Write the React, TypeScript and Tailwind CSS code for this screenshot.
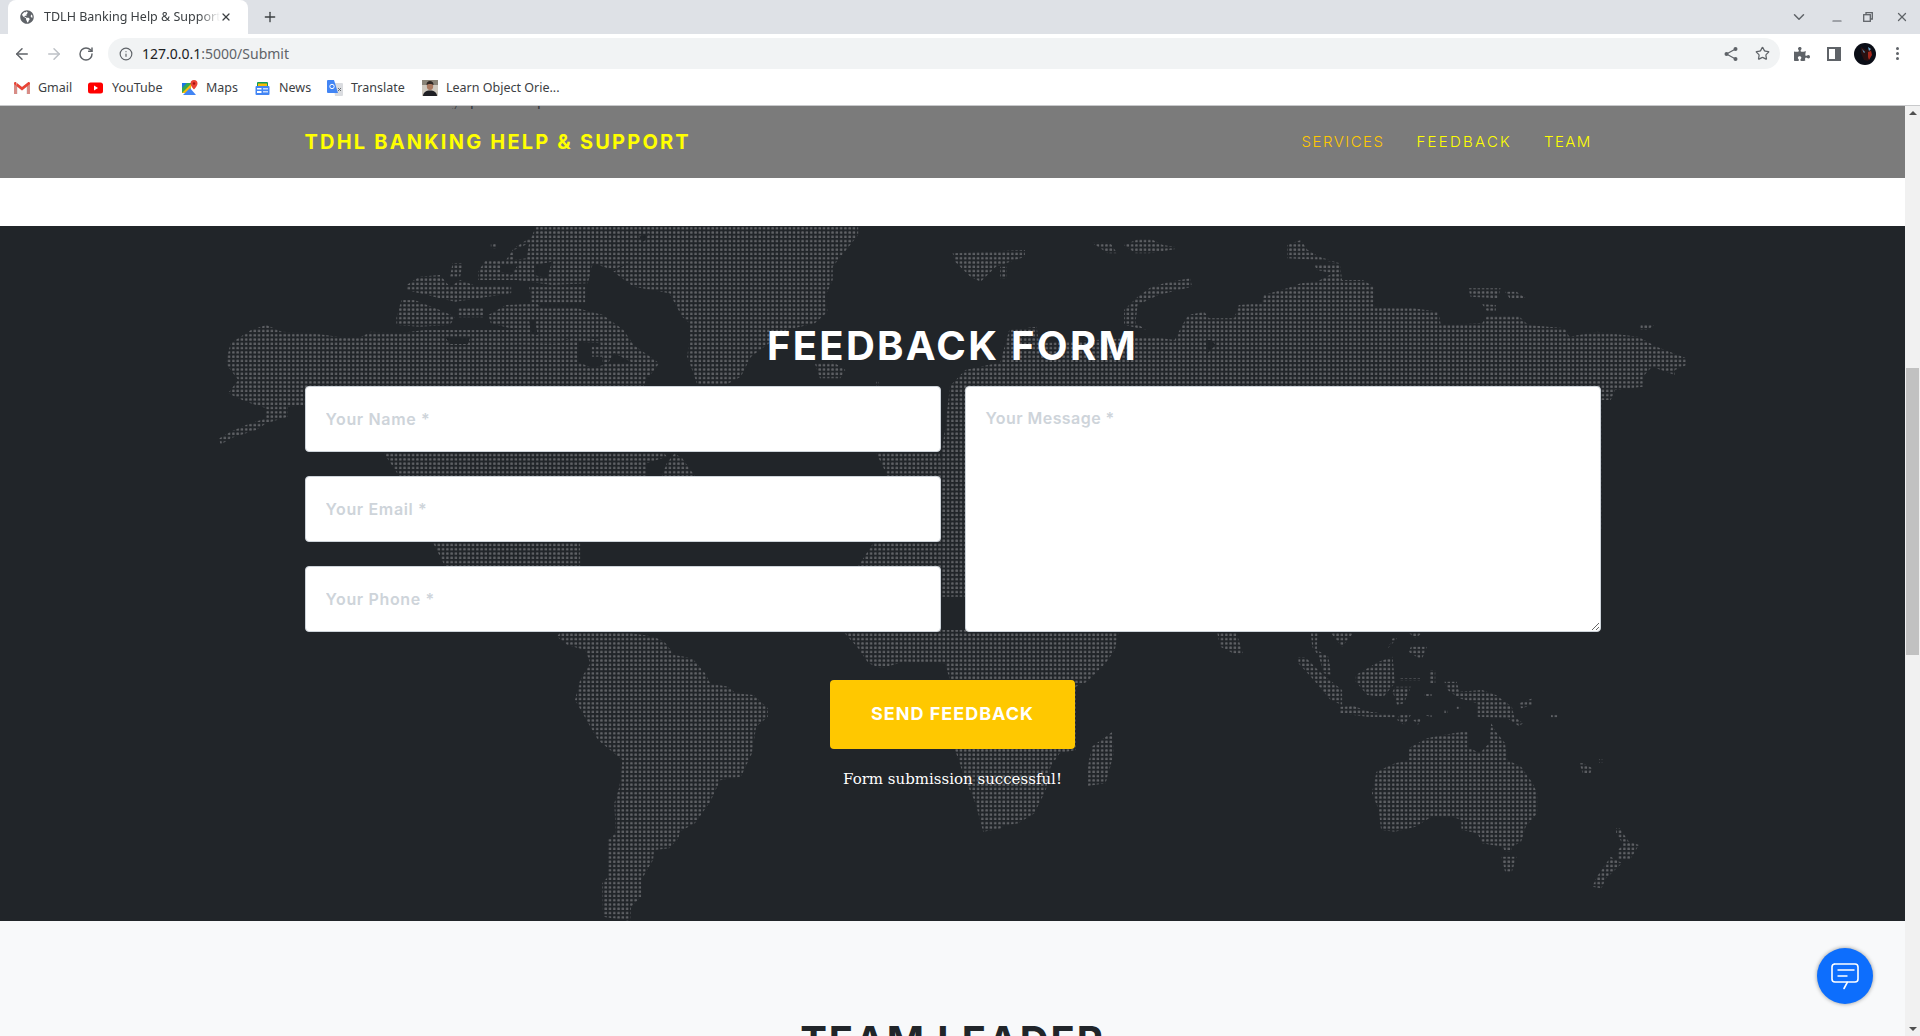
import React from "react";
import { ArrowLeft, ArrowRight, RotateCw, Info, Star, ChevronDown, X, Plus, Minus } from "lucide-react";
import { FaGlobeAmericas, FaPuzzlePiece } from "react-icons/fa";

type P = number[];
const path = (pts: P, ox: number, oy: number, sx: number) => {
  let d = "";
  for (let i = 0; i < pts.length; i += 2) {
    const x = ox + pts[i] / sx;
    const y = oy + pts[i + 1] / 3 - 226;
    d += (i === 0 ? "M" : "L") + x.toFixed(1) + " " + y.toFixed(1);
  }
  return d + "Z";
};

// Outlines traced from crops: each group has its own origin and horizontal scale.
const groupA: P[] = [
  [130,285,160,305,220,310,270,320,310,325,335,305,390,310,440,300,590,300,600,345,700,340,735,320,790,330,820,345,800,400,850,400,880,420,870,468,880,600,915,680,875,700,875,740,745,900,745,1010,640,1040,480,1008,390,738,360,668,207,525,172,530,172,560,130,580,110,600,60,625,40,645,38,625,60,605,90,585,130,565,130,535,90,515,55,490,75,450,50,400,60,340,100,300],
  [405,165,430,140,470,135,490,170,510,150,545,170,610,165,610,190,545,205,500,215,470,205,405,180],
  [395,210,420,210,470,240,500,260,490,285,430,290,385,285,385,260],
  [495,100,515,100,510,140,490,140],
  [570,40,580,40,580,55,570,55],
  [615,55,650,20,660,-15,900,-15,900,15,860,35,850,90,810,120,770,100,760,160,690,165,620,150,545,150,545,125,560,90,600,90],
  [645,170,755,170,755,218,650,218],
  [505,235,555,235,555,262,505,262],
  [565,255,600,225,660,220,670,235,740,235,790,255,830,300,850,345,900,400,880,440,850,400,800,360,780,325,730,320,700,340,600,345,590,300,620,300,570,280],
  [900,-15,1290,-15,1290,15,1240,110,1240,150,1225,200,1230,245,1205,280,1150,300,1080,380,1060,440,1030,465,975,465,960,400,955,380,960,320,960,280,945,260,920,190,850,170,810,125,850,90,850,30],
  [1205,400,1240,395,1265,420,1255,445,1215,445],
  [1475,70,1617,60,1617,80,1560,110,1530,155,1510,140,1480,95],
  [1470,468,1500,420,1560,400,1620,380,1620,1100,1450,1100,1450,700,1460,600],
  [1325,455,1330,455,1330,468,1325,468],
  [930,670,945,685,970,738,905,738,915,700],
  [1325,668,1450,668,1450,1200,1285,1200,1290,1008,1320,938,1345,730],
];
const holesA: P[] = [
  [740,335,785,340,790,405,770,415,740,395],
  [645,270,656,270,662,315,650,312],
  [660,110,680,110,670,130],
  [860,20,880,10,870,35],
  [590,105,625,100,610,135,590,125],
  [655,105,690,95,680,145,655,135],
  [615,60,645,40,640,85,615,90],
  [480,320,530,320,525,342,490,342],
];
const groupB: P[] = [
  [415,145,418,170,345,195,300,225,295,280,320,300,270,285,270,240,300,200,330,170,370,155],
  [0,400,20,300,80,290,85,340,330,320,380,330,395,290,410,255,445,245,455,265,510,265,520,225,570,220,575,195,625,175,655,160,690,155,725,130,690,120,685,105,740,100,700,90,625,85,625,45,655,30,670,60,695,80,740,100,745,150,790,150,815,170,815,230,860,235,900,235,955,245,960,285,1050,280,1060,258,1130,258,1150,285,1230,295,1240,320,1300,305,1390,320,1430,350,1495,385,1495,405,1470,420,1470,435,1420,410,1400,440,1400,470,1340,480,1330,510,1310,510,1310,900,0,900],
  [1020,175,1090,175,1085,205,1025,200],
  [1100,185,1125,185,1145,205,1110,205],
  [1050,222,1080,225,1080,242,1060,242],
  [1395,282,1428,282,1410,300,1395,300],
  [200,38,240,38,255,70,235,70],
  [270,45,300,28,330,28,355,45,380,50,380,58,325,70,295,70],
  [0,110,15,110,15,145,0,145],
];
const holesB: P[] = [[448,330,460,330,470,345,450,372]];
const groupC: P[] = [
  [-10,38,258,38,250,90,230,130,190,185,165,200,165,390,130,400,110,440,100,510,75,580,40,610,0,620,-10,620],
  [245,335,248,400,230,490,190,498,190,450,200,380],
  [473,38,515,38,530,105,515,105,480,80],
  [677,38,692,38,690,90,715,110,722,165,705,160,695,110,680,80],
  [720,38,770,38,745,80],
  [890,38,920,38,905,55],
  [895,80,930,80,918,120,890,95],
  [855,55,865,55,845,85],
  [650,112,665,112,700,160,745,210,745,255,720,240,680,175,650,130],
  [825,125,855,110,860,190,835,230,800,225,775,185,775,165],
  [740,260,770,258,805,275,860,285,860,292,800,290,740,280],
  [860,200,895,200,880,250,865,255,855,215],
  [870,175,915,175,915,182,870,182],
  [935,150,948,150,948,190,935,190],
  [925,222,940,222,940,232,925,232],
  [870,285,895,285,880,315,865,300],
  [900,300,920,295,910,315],
  [925,285,940,285,940,292],
  [968,185,995,185,1000,215,1050,210,1080,225,1115,260,1120,290,1140,310,1130,318,1105,295,1040,290,1040,250,1000,235,975,210],
  [1130,250,1160,235,1160,255,1135,265],
  [1200,284,1215,284,1215,292,1200,292],
  [968,270,975,270,975,280,968,280],
  [995,260,1002,260,1002,268,995,268],
  [965,345,1020,332,1018,380,1045,400,1065,370,1070,310,1080,335,1100,370,1105,420,1135,440,1160,490,1170,520,1170,580,1145,620,1135,665,1115,680,1115,695,1100,695,1095,680,1050,670,1040,640,1005,630,1005,600,985,590,940,590,905,620,860,635,830,630,825,570,810,520,820,455,860,430,890,420,890,385,930,355],
  [1092,710,1125,710,1115,755,1100,755],
  [1342,625,1350,625,1370,665,1392,675,1385,690,1372,720,1345,720,1345,690,1358,675,1342,640],
  [1330,710,1355,730,1320,775,1310,805,1290,800,1300,770],
  [1262,430,1270,430,1290,445,1285,462,1270,462],
  [1305,418,1312,418,1312,428,1305,428],
];
const groupD: P[] = [
  [705,38,780,38,840,38,890,50,910,65,930,105,965,115,990,160,1000,190,1035,200,1050,220,1085,225,1113,265,1113,290,1090,320,1082,400,1060,470,1020,480,1000,545,970,610,940,635,938,655,920,685,890,690,888,720,880,740,865,780,865,830,845,860,843,903,790,890,788,790,800,770,798,660,815,640,812,550,822,500,828,420,780,360,735,240,745,180,765,130,755,90,720,75,700,50],
  [1258,30,1290,85,1310,130,1335,145,1380,125,1460,130,1470,180,1480,390,1500,480,1520,550,1535,635,1572,625,1572,30],
];
const islands: P[] = [[768,350,790,350,790,380,768,380]];

const land = [
  ...groupA.map((p) => path(p, 200, 230, 1.96)),
  ...groupB.map((p) => path(p, 1000, 230, 2.178)),
  ...groupC.map((p) => path(p, 1000, 620, 2.178)),
  ...groupD.map((p) => path(p, 200, 620, 1.96)),
];
const holes = [
  ...holesA.map((p) => path(p, 200, 230, 1.96)),
  ...holesB.map((p) => path(p, 1000, 230, 2.178)),
];
const top = islands.map((p) => path(p, 200, 230, 1.96));

function WorldMap() {
  return (
    <svg className="absolute left-0 top-0 h-[695px] w-[1905px]" viewBox="0 0 1905 695" aria-hidden="true">
      <defs>
        <pattern id="dots" width="4.28" height="4.28" patternUnits="userSpaceOnUse">
          <rect x="1" y="1" width="2.5" height="2.5" rx="0.8" fill="#606266" />
        </pattern>
        <mask id="landMask" maskUnits="userSpaceOnUse" x="0" y="0" width="1905" height="695">
          {land.map((d, i) => (
            <path key={i} d={d} fill="#fff" />
          ))}
          {holes.map((d, i) => (
            <path key={i} d={d} fill="#000" />
          ))}
          {top.map((d, i) => (
            <path key={i} d={d} fill="#fff" />
          ))}
        </mask>
      </defs>
      <rect x="0" y="0" width="1905" height="695" fill="url(#dots)" mask="url(#landMask)" />
    </svg>
  );
}

const GmailIcon = () => (
  <svg width="16" height="12" viewBox="0 0 16 12">
    <path d="M0 1.500C0 .3 1.300-.3 2.200.4L8 5 13.800.4C14.700-.3 16 .3 16 1.500V11c0 .6-.4 1-1 1h-2.500V5L8 8.500 3.500 5v7H1c-.6 0-1-.4-1-1z" fill="#d9d9d9" />
    <path d="M0 1.500C0 .3 1.300-.3 2.200.4L3 1v11H1c-.6 0-1-.4-1-1zM16 1.500c0-1.200-1.300-1.800-2.200-1.100L8 5 2.200.4 3 4.600 8 8.500 13 4.600V12h2c.6 0 1-.4 1-1z" fill="#ea4335" />
    <path d="M3 4.600V12H1c-.6 0-1-.4-1-1V2zM13 4.600V12h2c.6 0 1-.4 1-1V2z" fill="#c9c9c9" opacity="0.550" />
  </svg>
);
const YoutubeIcon = () => (
  <svg width="15" height="12" viewBox="0 0 15 12">
    <rect width="15" height="11" y="0.500" rx="2.500" fill="#f00" />
    <path d="M6 3.500v5l4-2.500z" fill="#fff" />
  </svg>
);
const MapsIcon = () => (
  <svg width="16" height="16" viewBox="0 0 16 16">
    <path d="M0 3h9v10H0z" fill="#34a853" />
    <path d="M0 13L9 4v9z" fill="#fbbc04" />
    <path d="M1 15l7-7 6 7z" fill="#4285f4" />
    <path d="M0 3h5L0 8z" fill="#1a73e8" />
    <path d="M12 0a3.500 3.500 0 0 1 3.500 3.500C15.500 6 12 9.500 12 9.500S8.500 6 8.500 3.500A3.500 3.500 0 0 1 12 0z" fill="#ea4335" />
    <circle cx="12" cy="3.500" r="1.200" fill="#a50e0e" />
  </svg>
);
const NewsIcon = () => (
  <svg width="15" height="15" viewBox="0 0 15 15">
    <rect x="2" y="1" width="11" height="5" rx="1" fill="#0f9d58" />
    <rect x="3" y="2.500" width="9" height="4" fill="#fbbc04" />
    <rect x="0.500" y="5" width="14" height="9" rx="1" fill="#4285f4" />
    <rect x="2" y="7" width="4.500" height="1.500" fill="#fff" />
    <rect x="8" y="7" width="5" height="1.500" fill="#c6dafc" />
    <rect x="2" y="10" width="4.500" height="2" fill="#fff" />
    <rect x="8" y="10" width="5" height="1.500" fill="#c6dafc" />
  </svg>
);
const TranslateIcon = () => (
  <svg width="16" height="16" viewBox="0 0 16 16">
    <path d="M6 3h9a1 1 0 0 1 1 1v11a1 1 0 0 1-1 1H8z" fill="#dadce0" />
    <path d="M1 0h6l4 13H1a1 1 0 0 1-1-1V1a1 1 0 0 1 1-1z" fill="#4285f4" />
    <circle cx="5" cy="6.500" r="2.200" fill="none" stroke="#fff" strokeWidth="1" />
    <path d="M11 8l3 3M14 8l-3 3" stroke="#5f6368" strokeWidth="0.900" />
  </svg>
);
const PortraitIcon = () => (
  <svg width="16" height="16" viewBox="0 0 16 16">
    <rect width="16" height="16" fill="#cfc9bf" />
    <rect width="16" height="5" fill="#8a8478" />
    <ellipse cx="8" cy="6" rx="3.200" ry="4" fill="#a9785f" />
    <path d="M4.500 5C4.500 2 6 1 8 1s3.500 1 3.500 4C10 3.500 6 3.500 4.500 5z" fill="#2e2723" />
    <path d="M1 16c0-3.500 3-5.500 7-5.500s7 2 7 5.500z" fill="#1f1f24" />
  </svg>
);

const ShareIcon = () => (
  <svg width="14" height="14" viewBox="0 0 14 14" fill="#5f6368">
    <circle cx="2.500" cy="7" r="2" />
    <circle cx="11.500" cy="2" r="2" />
    <circle cx="11.500" cy="12" r="2" />
    <path d="M2.500 7l9-5M2.500 7l9 5" stroke="#5f6368" strokeWidth="1.300" fill="none" />
  </svg>
);
const RestoreIcon = () => (
  <svg width="10" height="10" viewBox="0 0 10 10" fill="none" stroke="#5f6368" strokeWidth="1.300">
    <rect x="0.700" y="2.700" width="6.600" height="6.600" />
    <path d="M3 2.700V.7h6.300V7H7.300" />
  </svg>
);
const Avatar = () => (
  <svg width="22" height="22" viewBox="0 0 22 22">
    <circle cx="11" cy="11" r="11" fill="#0a0d16" />
    <path d="M7 4l5 3 5-2 1 6-4 7-4-1-3-7z" fill="#2a1010" />
    <path d="M8 6l3 3-1 1zM14 4l3 2-2 2z" fill="#6fa5c8" />
    <path d="M14 9l3-1 1 4-3 5-1-3z" fill="#a3271c" />
  </svg>
);
const Chat = () => (
  <svg width="30" height="28" viewBox="0 0 30 28" fill="none" stroke="#fff" strokeWidth="1.600">
    <path d="M5 2h20a3 3 0 0 1 3 3v12a3 3 0 0 1-3 3h-7.500L14 26.500" strokeLinecap="round" />
    <path d="M17.500 20H5a3 3 0 0 1-3-3V5a3 3 0 0 1 3-3" />
    <path d="M7.500 8h17M7.500 14h10" />
  </svg>
);

function Bookmark({ icon, label, className }: { icon: React.ReactNode; label: string; className: string }) {
  return (
    <div className={"flex items-center " + className}>
      <span className="flex w-[24px] shrink-0 items-center">{icon}</span>
      <span className="whitespace-nowrap text-[12.500px] text-[#3c4043]">{label}</span>
    </div>
  );
}

function Field({ placeholder }: { placeholder: string }) {
  return (
    <input
      placeholder={placeholder}
      className="h-[66px] w-full rounded-[4px] border border-[#ced4da] bg-white px-[20px] text-[16px] font-semibold tracking-[0.650px] placeholder:text-[#ced4da] [font-family:Inter,sans-serif]"
    />
  );
}

export default function App() {
  return (
    <div className="flex h-[1036px] w-[1920px] flex-col overflow-hidden bg-white [font-family:'Noto_Sans',sans-serif]">
      {/* Browser tab strip */}
      <div className="flex h-[34px] shrink-0 items-end bg-[#dee1e6] pl-[8px]">
        <div className="flex h-[34px] w-[240px] items-center rounded-t-[8px] bg-white pl-[12px]">
          <FaGlobeAmericas className="h-[14px] w-[14px] shrink-0 text-[#5f6368]" />
          <span className="ml-[10px] w-[176px] overflow-hidden whitespace-nowrap pt-[1px] text-[12.500px] text-[#3c4043] [mask-image:linear-gradient(to_right,black_88%,transparent)]">
            TDLH Banking Help &amp; Support
          </span>
          <X className="h-[12px] w-[12px] text-[#3c4043]" strokeWidth={2.500} />
        </div>
        <div className="flex h-[34px] items-center pl-[14px]">
          <Plus className="h-[16px] w-[16px] text-[#3c4043]" strokeWidth={2} />
        </div>
        <div className="flex-1" />
        <div className="flex h-[34px] items-center">
          <ChevronDown className="h-[18px] w-[18px] text-[#5f6368]" strokeWidth={2} />
          <Minus className="ml-[22px] mt-[8px] h-[14px] w-[14px] text-[#5f6368]" strokeWidth={2} />
          <span className="ml-[19px]"><RestoreIcon /></span>
          <X className="ml-[22px] mr-[11px] h-[14px] w-[14px] text-[#5f6368]" strokeWidth={2.200} />
        </div>
      </div>

      {/* Toolbar */}
      <div className="flex h-[36px] shrink-0 items-center bg-white pl-[13px] pt-[3px]">
        <ArrowLeft className="h-[18px] w-[18px] text-[#5f6368]" strokeWidth={2} />
        <ArrowRight className="ml-[14px] h-[18px] w-[18px] text-[#bdc1c6]" strokeWidth={2} />
        <RotateCw className="ml-[15px] h-[16px] w-[16px] text-[#5f6368]" strokeWidth={2.200} />
        <div className="ml-[14px] flex h-[31px] w-[1672px] items-center rounded-full bg-[#f1f3f4] pl-[11px] pr-[10px]">
          <Info className="h-[14px] w-[14px] text-[#5f6368]" strokeWidth={2} />
          <span className="ml-[9px] -mt-[1px] text-[14px] text-[#202124]">
            127.0.0.1<span className="text-[#5f6368]">:5000/Submit</span>
          </span>
          <div className="flex-1" />
          <ShareIcon />
          <Star className="ml-[17px] h-[15px] w-[15px] text-[#5f6368]" strokeWidth={2} />
        </div>
        <FaPuzzlePiece className="ml-[14px] h-[16px] w-[16px] text-[#5f6368]" />
        <span className="ml-[17px] h-[14px] w-[14px] border-[2px] border-r-[6px] border-[#5f6368]" />
        <span className="ml-[13px]"><Avatar /></span>
        <span className="ml-[20px] flex flex-col gap-[2px]">
          <span className="h-[3px] w-[3px] rounded-full bg-[#5f6368]" />
          <span className="h-[3px] w-[3px] rounded-full bg-[#5f6368]" />
          <span className="h-[3px] w-[3px] rounded-full bg-[#5f6368]" />
        </span>
      </div>

      {/* Bookmarks */}
      <div className="flex h-[36px] shrink-0 items-center border-b border-[#c8c9cb] bg-white pl-[14px] pt-[1px]">
        <Bookmark icon={<GmailIcon />} label="Gmail" className="w-[74px]" />
        <Bookmark icon={<YoutubeIcon />} label="YouTube" className="w-[94px]" />
        <Bookmark icon={<MapsIcon />} label="Maps" className="w-[73px]" />
        <Bookmark icon={<NewsIcon />} label="News" className="w-[72px]" />
        <Bookmark icon={<TranslateIcon />} label="Translate" className="w-[95px]" />
        <Bookmark icon={<PortraitIcon />} label="Learn Object Orie..." className="w-[145px]" />
      </div>

      <div className="flex min-h-0 flex-1">
        {/* Page */}
        <div className="relative w-[1905px] overflow-hidden">
          {/* Navbar */}
          <div className="relative h-[72px] bg-[#7b7b7b]">
            <div className="absolute left-[452px] top-0 h-[3px] overflow-hidden text-[16px] leading-[16px] text-[#33373b] [font-family:'Liberation_Serif',serif]">
              <div className="-mt-[13px] whitespace-nowrap tracking-[3px]">y p &nbsp;&nbsp;&nbsp;&nbsp;&nbsp;&nbsp;&nbsp;p</div>
            </div>
            <div className="mx-auto flex h-full w-[1320px] items-center justify-between px-[12px] [font-family:Inter,sans-serif]">
              <span className="text-[20px] font-bold tracking-[2.200px] text-[#ffff00]">TDHL BANKING HELP &amp; SUPPORT</span>
              <nav className="flex items-center gap-[32px] pr-[9px] text-[15px] font-light">
                <span className="tracking-[1.500px] text-[#ffc800]">SERVICES</span>
                <span className="tracking-[2.250px] text-[#ffff00]">FEEDBACK</span>
                <span className="tracking-[1.350px] text-[#ffff00]">TEAM</span>
              </nav>
            </div>
          </div>

          <div className="h-[48px] bg-white" />

          {/* Feedback section */}
          <section className="relative h-[695px] overflow-hidden bg-[#212529] pt-[96px]">
            <WorldMap />
            <div className="relative mx-auto w-[1320px] px-[12px]">
              <h2 className="text-center text-[40px] font-bold leading-[48px] tracking-[2.300px] text-white [font-family:Inter,sans-serif]">FEEDBACK FORM</h2>
              <div className="mt-[16px] grid grid-cols-2 gap-x-[24px]">
                <div className="flex flex-col gap-[24px]">
                  <Field placeholder="Your Name *" />
                  <Field placeholder="Your Email *" />
                  <Field placeholder="Your Phone *" />
                </div>
                <textarea
                  placeholder="Your Message *"
                  className="h-[246px] w-full rounded-[4px] border border-[#ced4da] bg-white px-[20px] py-[19px] text-[16px] font-semibold tracking-[0.450px] placeholder:text-[#ced4da] [font-family:Inter,sans-serif]"
                />
              </div>
              <div className="mt-[48px] flex flex-col items-center">
                <button className="h-[69px] w-[245px] rounded-[4px] bg-[#ffc800] pb-[2px] text-[18px] font-bold tracking-[1px] text-white [font-family:Inter,sans-serif]">
                  SEND FEEDBACK
                </button>
                <p className="mt-[18px] text-[15px] leading-[24px] text-white [font-family:'DejaVu_Serif',serif]">Form submission successful!</p>
              </div>
            </div>
          </section>

          {/* Team section */}
          <section className="h-[200px] bg-[#f8f9fa] pt-[96px]">
            <h2 className="text-center text-[40px] font-bold leading-[48px] tracking-[1.900px] text-[#212529] [font-family:Inter,sans-serif]">TEAM LEADER</h2>
          </section>

          <button className="absolute left-[1817px] top-[842px] flex h-[56px] w-[56px] items-center justify-center rounded-full bg-[#0d6efd] shadow-[0_0_4px_rgba(0,0,0,0.4)]">
            <Chat />
          </button>
        </div>

        {/* Scrollbar */}
        <div className="flex w-[15px] shrink-0 flex-col items-center bg-[#f1f1f1]">
          <div className="mt-[5px] h-0 w-0 border-x-[4px] border-b-[4px] border-x-transparent border-b-[#505050]" />
          <div className="mt-[253px] h-[287px] w-[13px] bg-[#c1c1c1]" />
          <div className="flex-1" />
          <div className="mb-[5px] h-0 w-0 border-x-[4px] border-t-[4px] border-x-transparent border-t-[#505050]" />
        </div>
      </div>
    </div>
  );
}
